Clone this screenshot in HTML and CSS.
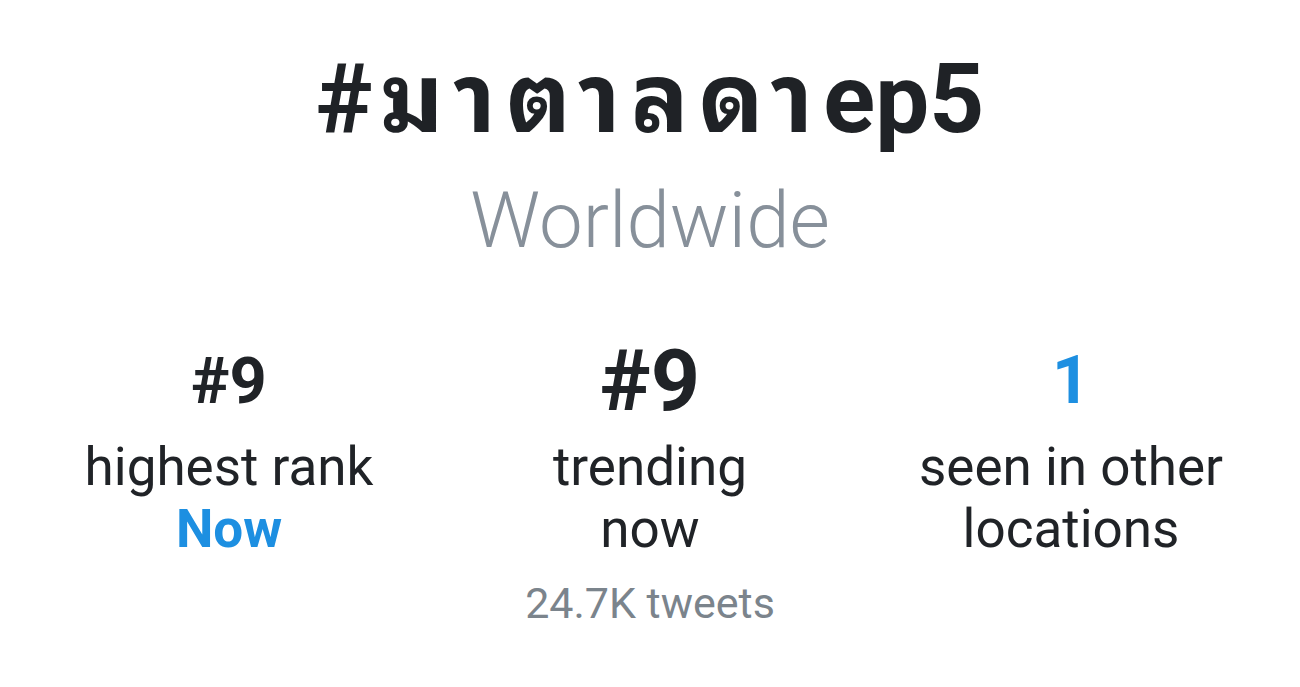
FILE: index.html
```html
<!DOCTYPE html>
<html lang="th">
<head>
  <meta charset="utf-8">
  <title>#มาตาลดาep5 trend</title>
  <link rel="stylesheet" href="styles.css">
</head>
<body>
<div class="trend">
  <h1 class="tag">#<span class="thai">มาตาลดา</span>ep5</h1>
  <div class="place">Worldwide</div>
  <div class="stats">
    <div class="stat">
      <div class="num small">#9</div>
      <div class="label">highest rank</div>
      <div class="label when">Now</div>
    </div>
    <div class="stat">
      <div class="num big">#9</div>
      <div class="label">trending<br>now</div>
      <div class="count">24.7K tweets</div>
    </div>
    <div class="stat">
      <div class="num small link">1</div>
      <div class="label">seen in other<br>locations</div>
    </div>
  </div>
</div>
</body>
</html>
```

FILE: styles.css
```css
body { margin: 0; background-color: #ffffff; color: #202327; font-family: Roboto, "Noto Sans Thai Looped", "Noto Serif Thai", "Noto Sans Thai", "Noto Sans", sans-serif; }
.trend { display: flex; flex-direction: column; align-items: center; padding-top: 51px; }
.tag { margin: 0; font-size: 96px; line-height: 96px; font-weight: 700; color: #1f2226; }
.tag .thai { letter-spacing: 10px; margin-left: 8px; }
.place { margin-top: 35px; font-size: 78px; line-height: 78px; font-weight: 300; color: #87909a; }
.stats { display: grid; grid-template-columns: repeat(3, 421px); justify-content: center; margin-top: 81px; }
.stat { display: flex; flex-direction: column; align-items: center; text-align: center; }
.num { height: 80px; line-height: 80px; font-weight: 700; }
.num.small { font-size: 65px; }
.num.big { font-size: 86px; }
.num.link { font-size: 66px; color: #1d8fe1; }
.label { font-size: 53px; line-height: 62px; }
.stat .label:nth-child(2) { margin-top: 15px; }
.label.when { font-weight: 700; color: #1d8fe1; }
.count { margin-top: 18px; font-size: 43px; line-height: 50px; color: #7b848c; }
```
